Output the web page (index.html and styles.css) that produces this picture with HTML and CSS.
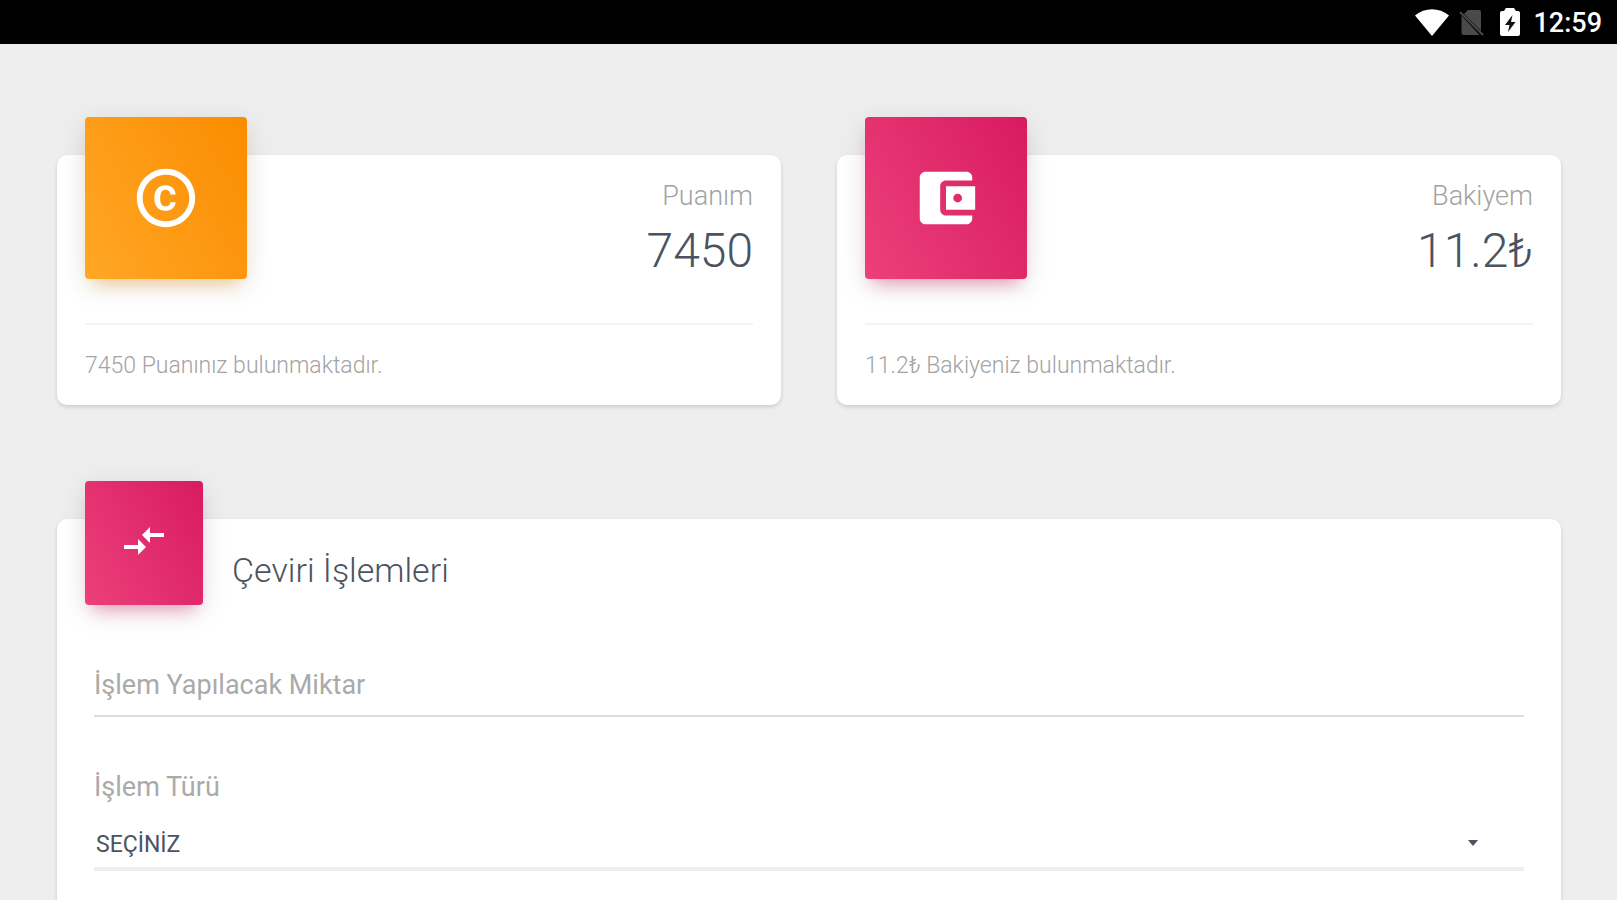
FILE: index.html
```html
<!DOCTYPE html>
<html lang="tr">
<head>
    <meta charset="UTF-8">
    <meta name="viewport" content="width=device-width, initial-scale=1.0">
    <title>Çeviri İşlemleri</title>
    <link rel="stylesheet" href="styles.css">
</head>
<body>
    <header class="status-bar">
        <svg class="wifi" viewBox="0 0 34 27" aria-hidden="true">
            <path d="M0 6.500C10 -2 24 -2 34 6.500L17 27z" fill="#fff"/>
        </svg>
        <svg class="no-sim" viewBox="0 0 25 27" aria-hidden="true">
            <path d="M9 1h11a2 2 0 0 1 2 2v19L5 5z" fill="#4a4a4a"/>
            <path d="M2.500 6.500L20.500 26H4.500a2 2 0 0 1-2-2z" fill="#4a4a4a"/>
            <path d="M1 3l23 23" stroke="#4a4a4a" stroke-width="2"/>
        </svg>
        <svg class="battery" viewBox="0 0 20 28" aria-hidden="true">
            <path d="M4 3l2-3h8l2 3h2a2 2 0 0 1 2 2v21a2 2 0 0 1-2 2H2a2 2 0 0 1-2-2V5a2 2 0 0 1 2-2z" fill="#fff"/>
            <path d="M12.500 7L5 17h4.500L8 24l7.500-10H11z" fill="#111"/>
        </svg>
        <span class="clock">12:59</span>
    </header>

    <main class="content">
        <div class="stats">
            <section class="card">
                <div class="card-header">
                    <div class="card-icon orange">
                        <svg viewBox="0 0 24 24" aria-hidden="true">
                            <path d="M11.880 9.140c1.280.060 1.610 1.150 1.630 1.660h1.790c-.080-1.980-1.490-3.190-3.450-3.190C9.640 7.610 8 9 8 12.140c0 1.940.930 4.240 3.840 4.240 2.220 0 3.410-1.650 3.440-2.950h-1.790c-.030.590-.450 1.380-1.630 1.440-1.310-.040-1.860-1.060-1.860-2.730 0-2.890 1.280-2.980 1.880-3zM12 2C6.480 2 2 6.480 2 12s4.480 10 10 10 10-4.480 10-10S17.520 2 12 2zm0 18c-4.410 0-8-3.590-8-8s3.590-8 8-8 8 3.590 8 8-3.590 8-8 8z"/>
                        </svg>
                    </div>
                    <div class="card-value">
                        <p class="card-category">Puanım</p>
                        <h3>7450</h3>
                    </div>
                </div>
                <div class="card-footer">7450 Puanınız bulunmaktadır.</div>
            </section>

            <section class="card">
                <div class="card-header">
                    <div class="card-icon pink">
                        <svg viewBox="0 0 24 24" aria-hidden="true">
                            <path d="M21 18v1c0 1.100-.900 2-2 2H5c-1.110 0-2-.900-2-2V5c0-1.100.890-2 2-2h14c1.100 0 2 .900 2 2v1h-9c-1.110 0-2 .900-2 2v8c0 1.100.890 2 2 2h9zm-9-2h10V8H12v8zm4-2.500c-.830 0-1.500-.670-1.500-1.500s.670-1.500 1.500-1.500 1.500.670 1.500 1.500-.670 1.500-1.500 1.500z"/>
                        </svg>
                    </div>
                    <div class="card-value">
                        <p class="card-category">Bakiyem</p>
                        <h3>11.2₺</h3>
                    </div>
                </div>
                <div class="card-footer">11.2₺ Bakiyeniz bulunmaktadır.</div>
            </section>
        </div>

        <section class="card form-card">
            <div class="card-header">
                <div class="card-icon small pink">
                    <svg viewBox="0 0 24 24" aria-hidden="true">
                        <path d="M9.010 14H2v2h7.010v3L13 15l-3.990-4v3zm5.980-1v-3H22V8h-7.010V5L11 9l3.990 4z"/>
                    </svg>
                </div>
                <h4>Çeviri İşlemleri</h4>
            </div>
            <form>
                <div class="form-group amount">
                    <label for="miktar">İşlem Yapılacak Miktar</label>
                    <input type="text" id="miktar">
                </div>
                <div class="form-group type">
                    <label for="tur">İşlem Türü</label>
                    <div class="select-wrap">
                        <select id="tur">
                            <option>SEÇİNİZ</option>
                        </select>
                        <span class="caret"></span>
                    </div>
                </div>
            </form>
        </section>
    </main>
</body>
</html>
```
FILE: styles.css
```css
* {
    box-sizing: border-box;
}
body {
    margin: 0;
    height: 100vh;
    overflow: hidden;
    font-family: Roboto, "Noto Sans", sans-serif;
    font-weight: 300;
    background-color: #eee;
    color: #4a5361;
}
h3, h4, p {
    margin: 0;
    font-weight: 300;
}
.status-bar {
    display: flex;
    align-items: center;
    justify-content: flex-end;
    height: 44px;
    padding-right: 15px;
    background-color: #000;
    color: #fff;
}
.wifi {
    width: 34px;
    height: 27px;
    margin-right: 10px;
}
.no-sim {
    width: 25px;
    height: 27px;
    margin-right: 16px;
}
.battery {
    width: 20px;
    height: 28px;
    margin-right: 13px;
}
.clock {
    padding-top: 2px;
    font-size: 27px;
    font-weight: 500;
    line-height: 42px;
}
.content {
    padding: 111px 56px 0 57px;
}
.stats {
    display: grid;
    grid-template-columns: 1fr 1fr;
    gap: 56px;
    margin-bottom: 114px;
}
.card {
    padding: 0 28px;
    background-color: #fff;
    border-radius: 10px;
    box-shadow: 0 2px 4px rgba(0, 0, 0, 0.14);
}
.card-header {
    display: flex;
    justify-content: space-between;
}
.card-icon {
    display: flex;
    align-items: center;
    justify-content: center;
    width: 162px;
    height: 162px;
    margin-top: -38px;
    border-radius: 4px;
}
.card-icon svg {
    width: 70px;
    height: 70px;
    fill: #fff;
}
.orange {
    background: linear-gradient(60deg, #ffa726, #fb8c00);
    box-shadow: 0 6px 30px rgba(0, 0, 0, 0.1), 0 12px 16px -8px rgba(255, 152, 0, 0.4);
}
.pink {
    background: linear-gradient(60deg, #ec407a, #d81b60);
    box-shadow: 0 6px 30px rgba(0, 0, 0, 0.1), 0 12px 16px -8px rgba(233, 30, 99, 0.4);
}
.card-value {
    padding-top: 21px;
    text-align: right;
}
.card-category {
    color: #a3a3a3;
    font-size: 27px;
    line-height: 40px;
}
.card-value h3 {
    font-size: 48px;
    line-height: 70px;
}
.card-footer {
    margin-top: 37px;
    padding: 25px 0 23px;
    border-top: 2px solid #f4f4f4;
    color: #a3a3a3;
    font-size: 23px;
    line-height: 32px;
}
.form-card {
    min-height: 420px;
}
.form-card .card-header {
    justify-content: flex-start;
    gap: 29px;
}
.card-icon.small {
    width: 118px;
    height: 124px;
    padding-bottom: 4px;
}
.card-icon.small svg {
    width: 48px;
    height: 48px;
}
.form-card h4 {
    padding-top: 31px;
    font-size: 34px;
    line-height: 40px;
}
form {
    padding: 56px 9px;
}
.form-group label {
    color: #aaa;
    font-size: 27px;
    font-weight: 400;
    line-height: 36px;
}
/* the label sits inside the empty field */
.amount {
    display: grid;
    margin-bottom: 52px;
}
.amount label,
.amount input {
    grid-area: 1 / 1;
}
.amount label {
    padding-top: 6px;
}
.amount input,
.type select {
    width: 100%;
    border: 0;
    border-radius: 0;
    outline: none;
    background: transparent;
    color: #4a5361;
    font-family: inherit;
    font-weight: 400;
}
.amount input {
    height: 56px;
    border-bottom: 2px solid #ddd;
    font-size: 27px;
}
.type label {
    display: block;
}
.select-wrap {
    display: grid;
    align-items: center;
    margin-top: 14px;
    border-bottom: 4px solid #eee;
}
.select-wrap > * {
    grid-area: 1 / 1;
}
.type select {
    height: 48px;
    padding: 2px 2px 0;
    appearance: none;
    font-size: 23px;
}
.caret {
    justify-self: end;
    margin-right: 46px;
    border: 5px solid transparent;
    border-top: 6px solid #4a5361;
    border-bottom: 0;
    pointer-events: none;
}
```
